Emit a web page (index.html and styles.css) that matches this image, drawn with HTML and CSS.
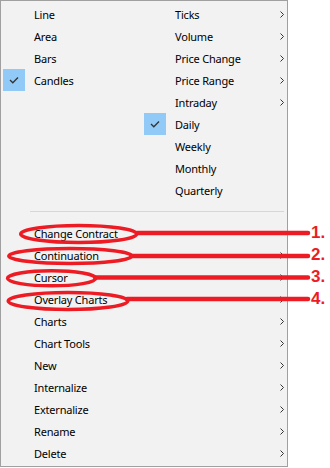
FILE: index.html
```html
<!DOCTYPE html>
<html lang="en">
<head>
  <meta charset="UTF-8">
  <title>Chart menu</title>
  <link rel="stylesheet" href="styles.css">
</head>
<body>

<div class="page">
  <div class="menu">
    <div class="cols">
      <ul class="col">
        <li class="item"><span class="check"></span><span class="label">Line</span></li>
        <li class="item"><span class="check"></span><span class="label">Area</span></li>
        <li class="item"><span class="check"></span><span class="label">Bars</span></li>
        <li class="item checked"><span class="check"><svg width="10" height="8" viewBox="0 0 10 8"><path d="M1 4 L3.8 6.8 L9 1.5" fill="none" stroke="#333" stroke-width="1.3"/></svg></span><span class="label">Candles</span></li>
      </ul>
      <ul class="col">
        <li class="item sub"><span class="check"></span><span class="label">Ticks</span><svg class="arrow" width="4" height="7" viewBox="0 0 4 7"><path d="M0.5 0.5 L3.5 3.5 L0.5 6.5" fill="none" stroke="#333" stroke-width="1"/></svg></li>
        <li class="item sub"><span class="check"></span><span class="label">Volume</span><svg class="arrow" width="4" height="7" viewBox="0 0 4 7"><path d="M0.5 0.5 L3.5 3.5 L0.5 6.5" fill="none" stroke="#333" stroke-width="1"/></svg></li>
        <li class="item sub"><span class="check"></span><span class="label">Price Change</span><svg class="arrow" width="4" height="7" viewBox="0 0 4 7"><path d="M0.5 0.5 L3.5 3.5 L0.5 6.5" fill="none" stroke="#333" stroke-width="1"/></svg></li>
        <li class="item sub"><span class="check"></span><span class="label">Price Range</span><svg class="arrow" width="4" height="7" viewBox="0 0 4 7"><path d="M0.5 0.5 L3.5 3.5 L0.5 6.5" fill="none" stroke="#333" stroke-width="1"/></svg></li>
        <li class="item sub"><span class="check"></span><span class="label">Intraday</span><svg class="arrow" width="4" height="7" viewBox="0 0 4 7"><path d="M0.5 0.5 L3.5 3.5 L0.5 6.5" fill="none" stroke="#333" stroke-width="1"/></svg></li>
        <li class="item checked"><span class="check"><svg width="10" height="8" viewBox="0 0 10 8"><path d="M1 4 L3.8 6.8 L9 1.5" fill="none" stroke="#333" stroke-width="1.3"/></svg></span><span class="label">Daily</span></li>
        <li class="item"><span class="check"></span><span class="label">Weekly</span></li>
        <li class="item"><span class="check"></span><span class="label">Monthly</span></li>
        <li class="item"><span class="check"></span><span class="label">Quarterly</span></li>
      </ul>
    </div>

    <div class="sep"></div>

    <ul class="list">
      <li class="item"><span class="check"></span><span class="label">Change Contract</span></li>
      <li class="item sub"><span class="check"></span><span class="label">Continuation</span><svg class="arrow" width="4" height="7" viewBox="0 0 4 7"><path d="M0.5 0.5 L3.5 3.5 L0.5 6.5" fill="none" stroke="#333" stroke-width="1"/></svg></li>
      <li class="item sub"><span class="check"></span><span class="label">Cursor</span><svg class="arrow" width="4" height="7" viewBox="0 0 4 7"><path d="M0.5 0.5 L3.5 3.5 L0.5 6.5" fill="none" stroke="#333" stroke-width="1"/></svg></li>
      <li class="item sub"><span class="check"></span><span class="label">Overlay Charts</span><svg class="arrow" width="4" height="7" viewBox="0 0 4 7"><path d="M0.5 0.5 L3.5 3.5 L0.5 6.5" fill="none" stroke="#333" stroke-width="1"/></svg></li>
      <li class="item sub"><span class="check"></span><span class="label">Charts</span><svg class="arrow" width="4" height="7" viewBox="0 0 4 7"><path d="M0.5 0.5 L3.5 3.5 L0.5 6.5" fill="none" stroke="#333" stroke-width="1"/></svg></li>
      <li class="item sub"><span class="check"></span><span class="label">Chart Tools</span><svg class="arrow" width="4" height="7" viewBox="0 0 4 7"><path d="M0.5 0.5 L3.5 3.5 L0.5 6.5" fill="none" stroke="#333" stroke-width="1"/></svg></li>
      <li class="item sub"><span class="check"></span><span class="label">New</span><svg class="arrow" width="4" height="7" viewBox="0 0 4 7"><path d="M0.5 0.5 L3.5 3.5 L0.5 6.5" fill="none" stroke="#333" stroke-width="1"/></svg></li>
      <li class="item sub"><span class="check"></span><span class="label">Internalize</span><svg class="arrow" width="4" height="7" viewBox="0 0 4 7"><path d="M0.5 0.5 L3.5 3.5 L0.5 6.5" fill="none" stroke="#333" stroke-width="1"/></svg></li>
      <li class="item sub"><span class="check"></span><span class="label">Externalize</span><svg class="arrow" width="4" height="7" viewBox="0 0 4 7"><path d="M0.5 0.5 L3.5 3.5 L0.5 6.5" fill="none" stroke="#333" stroke-width="1"/></svg></li>
      <li class="item sub"><span class="check"></span><span class="label">Rename</span><svg class="arrow" width="4" height="7" viewBox="0 0 4 7"><path d="M0.5 0.5 L3.5 3.5 L0.5 6.5" fill="none" stroke="#333" stroke-width="1"/></svg></li>
      <li class="item sub"><span class="check"></span><span class="label">Delete</span><svg class="arrow" width="4" height="7" viewBox="0 0 4 7"><path d="M0.5 0.5 L3.5 3.5 L0.5 6.5" fill="none" stroke="#333" stroke-width="1"/></svg></li>
    </ul>
  </div>

  <!-- red callouts drawn over the menu -->
  <svg class="marks" width="330" height="468" viewBox="0 0 330 468">
    <g fill="none" stroke="#ed1c24" stroke-width="3.5">
      <ellipse cx="78.7" cy="234" rx="58" ry="8.5"/>
      <ellipse cx="70.3" cy="256" rx="61.5" ry="7.5"/>
      <ellipse cx="51.7" cy="278.3" rx="44.2" ry="7.5"/>
      <ellipse cx="68" cy="301" rx="59.8" ry="8.5"/>
    </g>
    <g stroke="#ed1c24" stroke-width="4.5" stroke-linecap="round">
      <line x1="137" y1="233" x2="308" y2="233"/>
      <line x1="131" y1="256" x2="308" y2="256"/>
      <line x1="95" y1="277.5" x2="308" y2="277.5"/>
      <line x1="127" y1="299" x2="308" y2="299"/>
    </g>
    <g class="num" fill="#ed1c24">
      <text x="311" y="238">1.</text>
      <text x="311" y="260">2.</text>
      <text x="311" y="282">3.</text>
      <text x="311" y="304">4.</text>
    </g>
  </svg>
</div>

</body>
</html>
```

FILE: styles.css
```css
* {
  box-sizing: border-box;
}

html, body {
  margin: 0;
  padding: 0;
  background-color: #ffffff;
}

.page {
  position: relative;
  width: 330px;
  height: 468px;
}

.menu {
  width: 288px;
  border: 1px solid #a0a0a0;
  background-color: #f2f2f2;
  padding: 2px 0;
  font-family: "Noto Sans", sans-serif;
  font-size: 11px;
  letter-spacing: -0.2px;
  color: #000;
}

.cols {
  display: grid;
  grid-template-columns: 141px 1fr;
}

ul {
  list-style: none;
  margin: 0;
  padding: 0;
}

.item {
  display: flex;
  align-items: center;
  height: 22px;
  padding: 0 3px 0 2px;
}

.check {
  width: 22px;
  height: 22px;
  margin-right: 9px;
  display: flex;
  justify-content: center;
  align-items: center;
  flex: none;
}

.item.checked .check {
  background-color: #91c9f7;
}

.label {
  flex: 1;
  white-space: nowrap;
}

.arrow {
  flex: none;
  display: block;
}

.sep {
  height: 1px;
  background-color: #d7d7d7;
  margin: 10px 3px 10px 29px;
}

.marks {
  position: absolute;
  top: 0;
  left: 0;
  pointer-events: none;
}

.num text {
  font-family: "Liberation Sans", Arial, sans-serif;
  font-weight: bold;
  font-size: 17px;
}
```
